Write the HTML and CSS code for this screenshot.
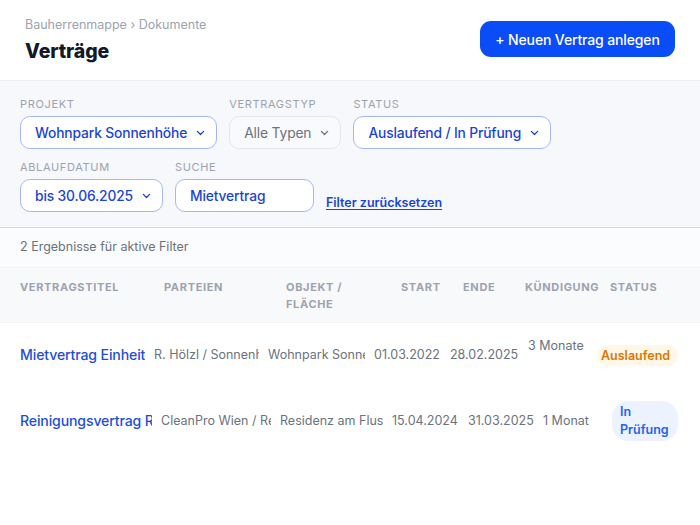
FILE: index.html
```html
<!DOCTYPE html>
<html lang="de">
<head>
<meta charset="utf-8">
<title>Verträge</title>
<link rel="stylesheet" href="styles.css">
</head>
<body>
<header class="topbar">
  <div class="heading">
    <div class="crumbs">Bauherrenmappe › Dokumente</div>
    <h1 class="title">Verträge</h1>
  </div>
  <button class="primary">+ Neuen Vertrag anlegen</button>
</header>

<section class="filters">
  <div class="field">
    <div class="label">Projekt</div>
    <div class="select active">Wohnpark Sonnenhöhe<svg class="chev" viewBox="0 0 10 6"><path d="M1.5 1.2 5 4.6 8.5 1.2"/></svg></div>
  </div>
  <div class="field">
    <div class="label">Vertragstyp</div>
    <div class="select idle">Alle Typen<svg class="chev" viewBox="0 0 10 6"><path d="M1.5 1.2 5 4.6 8.5 1.2"/></svg></div>
  </div>
  <div class="field">
    <div class="label">Status</div>
    <div class="select active">Auslaufend / In Prüfung<svg class="chev" viewBox="0 0 10 6"><path d="M1.5 1.2 5 4.6 8.5 1.2"/></svg></div>
  </div>
  <div class="field">
    <div class="label">Ablaufdatum</div>
    <div class="select active">bis 30.06.2025<svg class="chev" viewBox="0 0 10 6"><path d="M1.5 1.2 5 4.6 8.5 1.2"/></svg></div>
  </div>
  <div class="field">
    <div class="label">Suche</div>
    <div class="select active search">Mietvertrag</div>
  </div>
  <a class="reset" href="#">Filter zurücksetzen</a>
</section>

<div class="results">2 Ergebnisse für aktive Filter</div>

<div class="thead">
  <div>Vertragstitel</div>
  <div>Parteien</div>
  <div class="narrow">Objekt / Fläche</div>
  <div>Start</div>
  <div>Ende</div>
  <div>Kündigung</div>
  <div>Status</div>
</div>

<div class="row r1">
  <div class="cell name">Mietvertrag Einheit 4B</div>
  <div class="cell">R. Hölzl / Sonnenhöhe GmbH</div>
  <div class="cell">Wohnpark Sonnenhöhe, Top 4B</div>
  <div class="cell">01.03.2022</div>
  <div class="cell">28.02.2025</div>
  <div class="cell notice">3 Monate<span class="spacer"></span></div>
  <div class="badge warn">Auslaufend</div>
</div>

<div class="row r2">
  <div class="cell name">Reinigungsvertrag Residenz</div>
  <div class="cell">CleanPro Wien / Residenz KG</div>
  <div class="cell">Residenz am Fluss</div>
  <div class="cell">15.04.2024</div>
  <div class="cell">31.03.2025</div>
  <div class="cell">1 Monat</div>
  <div class="badge info">In Prüfung</div>
</div>
</body>
</html>
```
FILE: styles.css
```css
* { box-sizing: border-box; }
html, body { margin: 0; padding: 0; background: #ffffff; }
body {
  font-family: Inter, "Noto Sans", "Liberation Sans", sans-serif;
  color: #111827;
  width: 700px;
}

.topbar {
  display: flex;
  justify-content: space-between;
  align-items: center;
  padding: 17px 25px 17px 25px;
  border-bottom: 1px solid #eef0f4;
  height: 81px;
}
.crumbs {
  font-size: 12.5px;
  line-height: 16px;
  color: #9ca3af;
}
.title {
  margin: 6px 0 0 0;
  font-size: 19.5px;
  line-height: 24px;
  font-weight: 800;
  color: #111827;
  letter-spacing: -0.005em;
}
.primary {
  font-family: inherit;
  background: #0a4cf5;
  color: #ffffff;
  border: none;
  border-radius: 11px;
  height: 36px;
  width: 195px;
  padding: 0;
  font-size: 14px;
  letter-spacing: -0.01em;
  font-weight: 500;
  margin-top: -2px;
}

.filters {
  background: #f6f8fc;
  border-bottom: 1px solid #cbd5f5;
  padding: 16px 20px 15px 20px;
  display: flex;
  flex-wrap: wrap;
  column-gap: 12px;
  row-gap: 11px;
}
.field { display: flex; flex-direction: column; }
.label {
  font-size: 11px;
  line-height: 14px;
  color: #9ca3af;
  text-transform: uppercase;
  letter-spacing: 0.06em;
  margin-bottom: 5px;
}
.select {
  height: 33px;
  border-radius: 10px;
  display: flex;
  align-items: center;
  padding: 0 11px 0 14px;
  font-size: 13.8px;
  letter-spacing: -0.01em;
  font-weight: 500;
  background: #ffffff;
  white-space: nowrap;
}
.select.active {
  border: 1px solid #a5b8f3;
  color: #1a45d3;
}
.select.idle {
  border: 1px solid #e3e6eb;
  background: #f9fafb;
  color: #6b7280;
  font-weight: 400;
}
.select.search { width: 139px; }
.chev {
  width: 9px;
  height: 6px;
  margin-left: 9px;
  fill: none;
  stroke: currentColor;
  stroke-width: 1.5;
  stroke-linecap: round;
  stroke-linejoin: round;
}
.reset {
  align-self: flex-end;
  font-size: 12.5px;
  font-weight: 600;
  color: #1a45d3;
  text-decoration: underline;
  text-underline-offset: 2px;
  margin-bottom: 2px;
}

.results {
  background: #fbfcfe;
  font-size: 12.5px;
  line-height: 16px;
  color: #6b7280;
  padding: 11px 20px 12px 20px;
  border-bottom: 1px solid #f0f2f6;
}

.thead {
  display: grid;
  grid-template-columns: 144px 122px 115px 62px 62px 85px 1fr;
  background: #f8f9fb;
  padding: 11px 20px 9px 20px;
  font-size: 11px;
  line-height: 17px;
  font-weight: 700;
  letter-spacing: 0.06em;
  text-transform: uppercase;
  color: #9ca3af;
  border-bottom: 1px solid #f1f3f6;
}
.thead .narrow { max-width: 75px; }

.row {
  display: grid;
  column-gap: 9px;
  align-items: center;
  padding: 14px 20px 14px 20px;
}
.r1 { grid-template-columns: 125px 105px 97px 67px 69px 60px 1fr; }
.r2 { grid-template-columns: 132px 110px 103px 67px 66px 60px 1fr; }
.cell {
  overflow: hidden;
  white-space: nowrap;
  font-size: 12.5px;
  line-height: 18px;
  color: #6b7280;
}
.cell.name {
  font-size: 14.1px;
  letter-spacing: -0.01em;
  font-weight: 500;
  color: #1d4ed8;
}
.notice { display: flex; flex-direction: column; }
.spacer { display: block; height: 18px; }

.badge {
  justify-self: start;
  font-size: 12.5px;
  font-weight: 600;
  line-height: 18px;
  border-radius: 16px;
}
.badge.warn {
  white-space: nowrap;
  background: #fff8e8;
  color: #d97706;
  padding: 2px 8px 1px 4px;
}
.badge.info {
  background: #edf3fe;
  color: #2563eb;
  padding: 2px 8px 2px 8px;
  max-width: 66px;
}
```
